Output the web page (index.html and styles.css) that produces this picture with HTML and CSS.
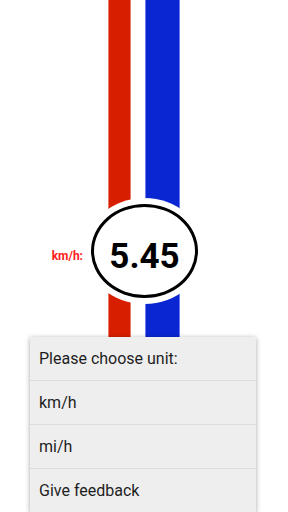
FILE: index.html
```html
<!DOCTYPE html>
<html lang="en">
  <head>
    <title>Speedometer</title>
    <meta charset="UTF-8" />
    <meta name="viewport" content="width=device-width" />
    <link rel="stylesheet" href="styles.css">
  </head>
  <body>
    <div class="stage">
      <div class="stripes">
        <div class="stripe red"></div>
        <div class="stripe blue"></div>
      </div>
      <div class="dial">
        <span class="unit">km/h:</span>
        <div class="circle">
          <span class="speed">5.45</span>
        </div>
      </div>
    </div>
    <ul class="menu">
      <li class="menu-title">Please choose unit:</li>
      <li class="menu-item">km/h</li>
      <li class="menu-item">mi/h</li>
      <li class="menu-item">Give feedback</li>
    </ul>
  </body>
</html>
```

FILE: styles.css
```css
/* Reset */
* {
  margin: 0;
  padding: 0;
  box-sizing: border-box;
  font-family: Roboto, "Liberation Sans", sans-serif;
}

body {
  background-color: #ffffff;
  width: 288px;
  height: 512px;
  overflow: hidden;
  position: relative;
}

/* Stripes and dial share one grid cell */
.stage {
  display: grid;
  height: 512px;
}

.stripes,
.dial {
  grid-area: 1 / 1;
}

.stripes {
  display: flex;
  gap: 14px;
  padding-left: 108px;
}

.stripe {
  height: 100%;
}

.red {
  width: 23px;
  background-color: #d81e00;
  border-left: 1px solid #ea7a6c;
  border-right: 1px solid #ea7a6c;
}

.blue {
  width: 35px;
  background-color: #0a26d2;
  border-left: 1px solid #6a7cf0;
  border-right: 1px solid #6a7cf0;
}

/* Speed dial */
.dial {
  display: flex;
  align-items: center;
  gap: 8px;
  align-self: start;
  margin-top: 204px;
}

.unit {
  width: 83px;
  text-align: right;
  color: #ff1a1a;
  font-size: 12px;
  font-weight: bold;
  margin-top: 10px;
}

.circle {
  width: 107px;
  height: 94px;
  border: 3px solid #000000;
  border-radius: 50%;
  background-color: #ffffff;
  box-shadow: 0 0 0 6px #ffffff;
  display: flex;
  align-items: center;
  justify-content: center;
}

.speed {
  font-size: 35px;
  font-weight: bold;
  color: #000000;
  margin-top: 10px;
}

/* Popup menu */
.menu {
  position: absolute;
  left: 30px;
  top: 337px;
  width: 226px;
  list-style: none;
  background-color: #eeeeee;
  box-shadow: 0 1px 5px rgba(0, 0, 0, 0.35);
}

.menu li {
  height: 44px;
  padding-left: 9px;
  display: flex;
  align-items: center;
  font-size: 16px;
  color: #1e1e1e;
  border-bottom: 1px solid #dcdcdc;
}
```
